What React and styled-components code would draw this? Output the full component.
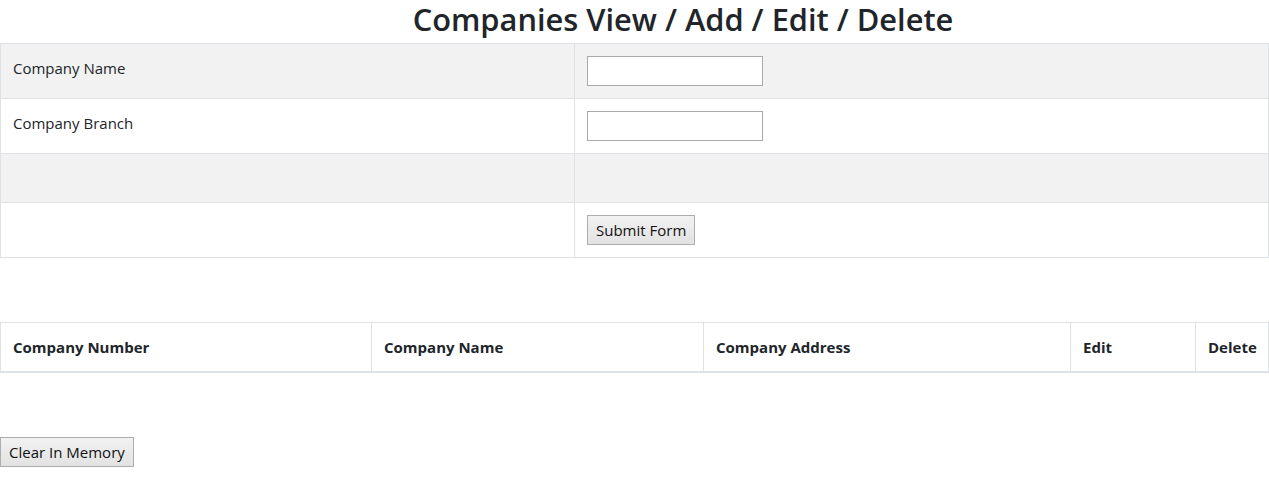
import React from "react";
import styled, { createGlobalStyle } from "styled-components";

const Global = createGlobalStyle`
  html, body { margin: 0; padding: 0; background: #fff; }
  body {
    font-family: "Open Sans", "Noto Sans", sans-serif;
    font-size: 15px;
    line-height: 24px;
    color: #212529;
  }
  * { box-sizing: border-box; }
`;

const Page = styled.div`
  width: 1269px;
`;

const Title = styled.h1`
  margin: 0 0 5px;
  padding-left: 97px;
  font-size: 30.8px;
  font-weight: 600;
  line-height: 38px;
  text-align: center;
  color: #212529;
`;

const Table = styled.table`
  width: 1269px;
  border-collapse: collapse;
  table-layout: fixed;
  margin-bottom: ${(p) => p.$mb || 0}px;
`;

const Row = styled.tr`
  background: ${(p) => (p.$striped ? "#f2f2f2" : "#fff")};
`;

const Cell = styled.td`
  border: 1px solid #dee2e6;
  padding: 12px;
  height: ${(p) => p.$h || "auto"};
  vertical-align: top;
  font-size: 15px;
  line-height: 25px;
`;

const HeadCell = styled.th`
  border: 1px solid #dee2e6;
  border-bottom: 2px solid #dee2e6;
  padding: 12px;
  text-align: left;
  font-weight: 700;
  font-size: 15px;
  line-height: 24px;
`;

const TextInput = styled.input`
  display: block;
  width: 176px;
  height: 30px;
  border: 1px solid #a9a9a9;
  background: #fff;
  padding: 2px 4px;
  font: inherit;
`;

const Button = styled.button`
  display: inline-block;
  height: 30px;
  padding: 0 8px;
  border: 1px solid #adadad;
  background: linear-gradient(#f2f2f2, #e2e2e2);
  font-family: "Open Sans", "Noto Sans", sans-serif;
  font-size: 15px;
  color: #111;
  line-height: 28px;
  border-radius: 0;
`;

const Footer = styled.div`
  padding-top: 64px;
`;

export default function App() {
  return (
    <Page>
      <Global />
      <Title>Companies View / Add / Edit / Delete</Title>
      <Table $mb={64}>
        <colgroup>
          <col style={{ width: 574 }} />
          <col />
        </colgroup>
        <tbody>
          <Row $striped>
            <Cell>Company Name</Cell>
            <Cell><TextInput type="text" /></Cell>
          </Row>
          <Row>
            <Cell>Company Branch</Cell>
            <Cell><TextInput type="text" /></Cell>
          </Row>
          <Row $striped>
            <Cell $h="49px"></Cell>
            <Cell $h="49px"></Cell>
          </Row>
          <Row>
            <Cell></Cell>
            <Cell><Button type="button">Submit Form</Button></Cell>
          </Row>
        </tbody>
      </Table>
      <Table>
        <colgroup>
          <col style={{ width: 371 }} />
          <col style={{ width: 332 }} />
          <col style={{ width: 367 }} />
          <col style={{ width: 125 }} />
          <col />
        </colgroup>
        <thead>
          <tr>
            <HeadCell>Company Number</HeadCell>
            <HeadCell>Company Name</HeadCell>
            <HeadCell>Company Address</HeadCell>
            <HeadCell>Edit</HeadCell>
            <HeadCell>Delete</HeadCell>
          </tr>
        </thead>
      </Table>
      <Footer>
        <Button type="button">Clear In Memory</Button>
      </Footer>
    </Page>
  );
}
